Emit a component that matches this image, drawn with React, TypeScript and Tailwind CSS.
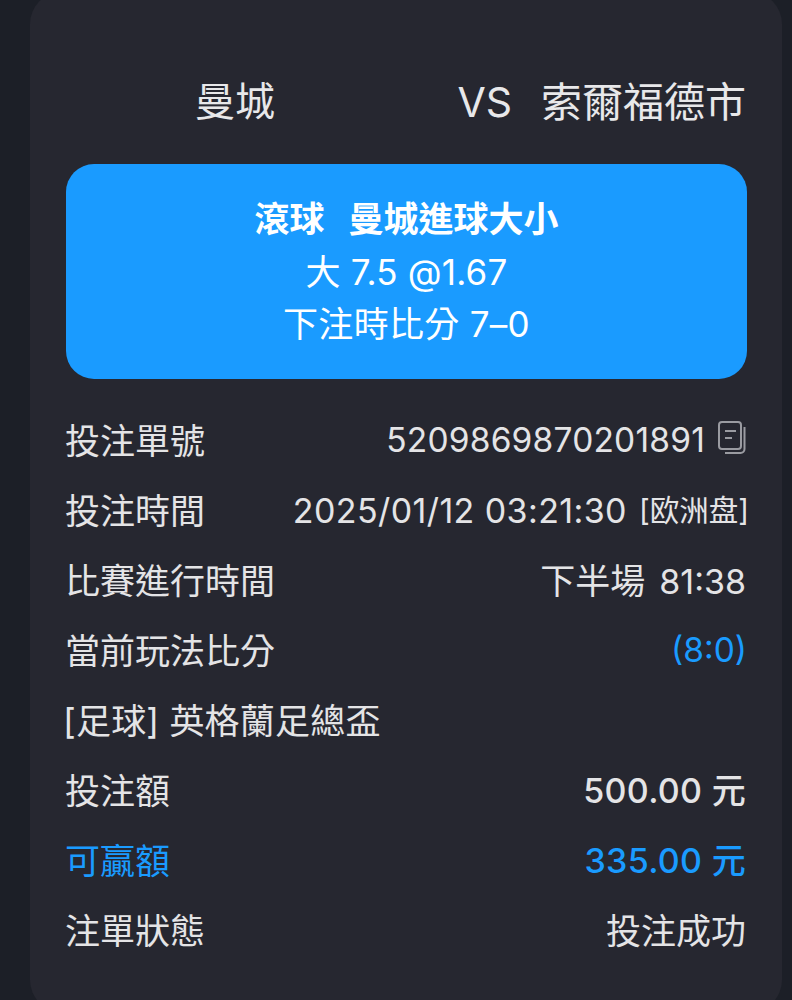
const font = { fontFamily: '"Inter", "Noto Sans CJK TC", sans-serif' };

function Row({ label, children, labelClass = "ml-[-1px] text-[#e4e4e6]" }: { label: string; children?: React.ReactNode; labelClass?: string }) {
  return (
    <div className="flex h-[70px] items-center justify-between">
      <span className={`text-[35px] leading-none whitespace-nowrap ${labelClass}`}>{label}</span>
      {children}
    </div>
  );
}

function CopyIcon() {
  return (
    <svg width="30" height="38" viewBox="0 0 30 38" fill="none" stroke="#9a9ba1" strokeWidth="2" className="ml-[12px] mt-[-4px]">
      <rect x="2" y="2" width="22" height="27" rx="3" />
      <path d="M8 11h11M8 18h7" />
      <path d="M27.5 7v22a4 4 0 0 1-4 4H8" />
    </svg>
  );
}

export default function App() {
  return (
    <div style={font} className="h-[1000px] w-[792px] overflow-hidden bg-[#1c1f27]">
      <div className="mt-[-8px] ml-[30px] h-[1020px] w-[752px] rounded-[32px] bg-[#262730] pl-[36px] pr-[36px]">
        <div className="flex h-[172px] items-end pb-[37px] text-[41px] leading-[50px] text-[#e8e8ea]">
          <span className="ml-[129px] w-[264px] text-[40px]">曼城</span>
          <span className="w-[84px] text-[41px] font-normal">VS</span>
          <span className="whitespace-nowrap">索爾福德市</span>
        </div>
        <div className="flex h-[215px] w-[681px] flex-col items-center justify-center rounded-[28px] bg-[#1a9bff] text-white">
          <div className="flex h-[52px] gap-[24px] text-[35px] font-bold leading-[50px]">
            <span>滾球</span>
            <span>曼城進球大小</span>
          </div>
          <div className="h-[52px] text-[35px] font-normal leading-[52px] tracking-[0.2px]">大 7.5 @1.67</div>
          <div className="h-[52px] text-[35px] font-normal leading-[52px] tracking-[0.3px]">下注時比分 7–0</div>
        </div>
        <div className="mt-[27px] w-[681px]">
          <Row label="投注單號">
            <span className="flex items-center text-[#e4e4e6]">
              <span className="text-[33.5px] font-normal leading-none tracking-[0.2px]">5209869870201891</span>
              <CopyIcon />
            </span>
          </Row>
          <Row label="投注時間">
            <span className="mr-[-2px] flex items-center whitespace-nowrap text-[#e4e4e6]">
              <span className="text-[34px] font-normal leading-none tracking-[0.4px]">2025/01/12 03:21:30</span>
              <span className="ml-[12px] text-[29.5px] leading-none">[欧洲盘]</span>
            </span>
          </Row>
          <Row label="比賽進行時間">
            <span className="mr-[1px] whitespace-nowrap text-[34px] font-normal leading-none text-[#e4e4e6]">
              <span className="text-[35px]">下半場</span>
              <span className="ml-[14px]">81:38</span>
            </span>
          </Row>
          <Row label="當前玩法比分">
            <span className="text-[33.5px] font-normal leading-none text-[#1a9bff]">(8:0)</span>
          </Row>
          <Row label="[足球] 英格蘭足總盃" labelClass="ml-[-3px] tracking-[0.2px] text-[#e4e4e6]" />
          <Row label="投注額">
            <span className="mr-[1px] text-[34px] font-[450] leading-none tracking-[0.3px] text-[#e4e4e6]">500.00 元</span>
          </Row>
          <Row label="可贏額" labelClass="ml-[-1px] text-[#1a9bff]">
            <span className="mr-[1px] text-[34px] font-[450] leading-none tracking-[0.3px] text-[#1a9bff]">335.00 元</span>
          </Row>
          <Row label="注單狀態">
            <span className="mr-[1px] text-[35px] leading-none text-[#e4e4e6]">投注成功</span>
          </Row>
        </div>
      </div>
    </div>
  );
}
